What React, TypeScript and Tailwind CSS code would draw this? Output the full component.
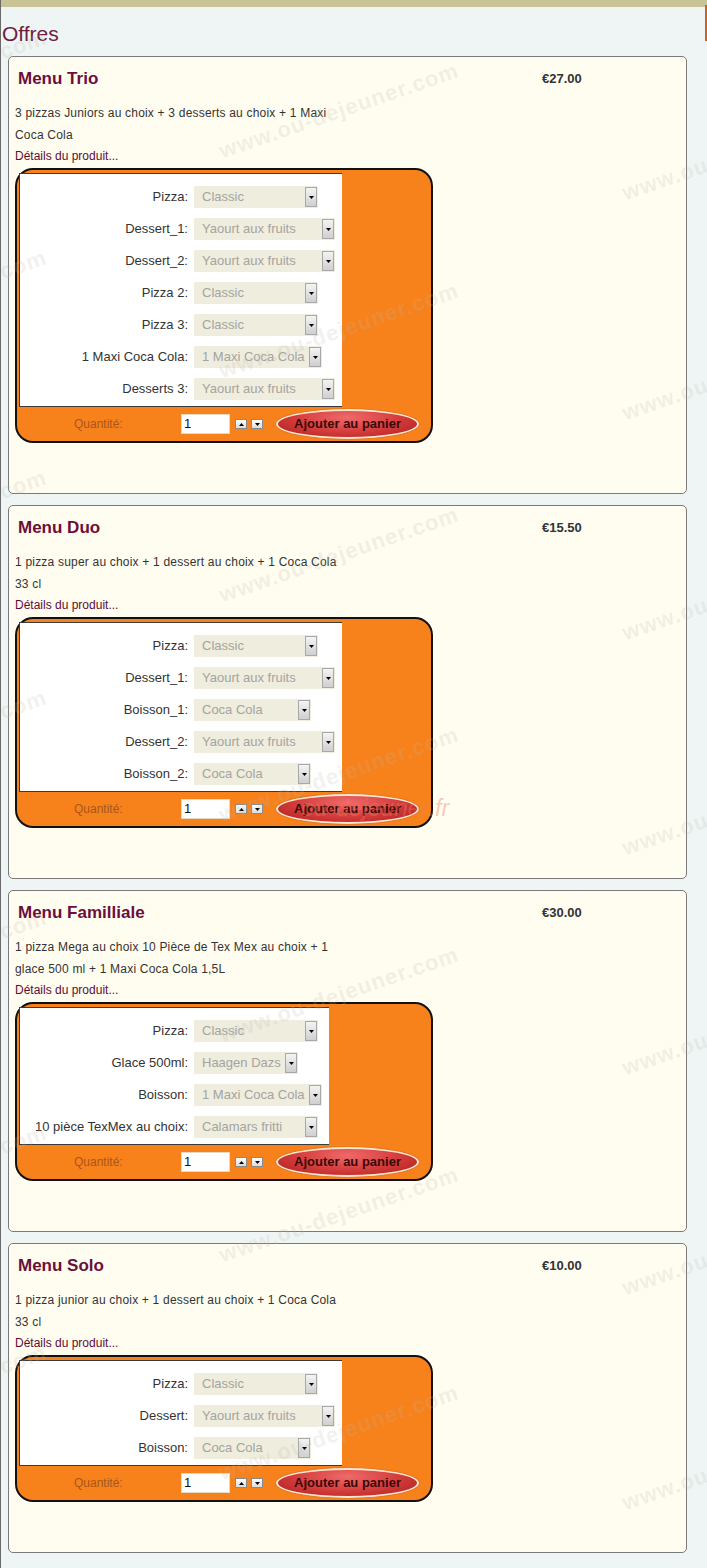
import React from 'react'

type Option = { label: string; value: string; width: string }
type Menu = { name: string; price: string; desc: string; options: Option[] }

const menus: Menu[] = [
  {
    name: 'Menu Trio',
    price: '€27.00',
    desc: '3 pizzas Juniors au choix + 3 desserts au choix + 1 Maxi Coca Cola',
    options: [
      { label: 'Pizza:', value: 'Classic', width: 'w-[124px]' },
      { label: 'Dessert_1:', value: 'Yaourt aux fruits', width: 'w-[141px]' },
      { label: 'Dessert_2:', value: 'Yaourt aux fruits', width: 'w-[141px]' },
      { label: 'Pizza 2:', value: 'Classic', width: 'w-[124px]' },
      { label: 'Pizza 3:', value: 'Classic', width: 'w-[124px]' },
      { label: '1 Maxi Coca Cola:', value: '1 Maxi Coca Cola', width: 'w-[128px]' },
      { label: 'Desserts 3:', value: 'Yaourt aux fruits', width: 'w-[141px]' },
    ],
  },
  {
    name: 'Menu Duo',
    price: '€15.50',
    desc: '1 pizza super au choix + 1 dessert au choix + 1 Coca Cola 33 cl',
    options: [
      { label: 'Pizza:', value: 'Classic', width: 'w-[124px]' },
      { label: 'Dessert_1:', value: 'Yaourt aux fruits', width: 'w-[141px]' },
      { label: 'Boisson_1:', value: 'Coca Cola', width: 'w-[117px]' },
      { label: 'Dessert_2:', value: 'Yaourt aux fruits', width: 'w-[141px]' },
      { label: 'Boisson_2:', value: 'Coca Cola', width: 'w-[117px]' },
    ],
  },
  {
    name: 'Menu Familliale',
    price: '€30.00',
    desc: '1 pizza Mega au choix 10 Pièce de Tex Mex au choix + 1 glace 500 ml + 1 Maxi Coca Cola 1,5L',
    options: [
      { label: 'Pizza:', value: 'Classic', width: 'w-[124px]' },
      { label: 'Glace 500ml:', value: 'Haagen Dazs', width: 'w-[104px]' },
      { label: 'Boisson:', value: '1 Maxi Coca Cola', width: 'w-[128px]' },
      { label: '10 pièce TexMex au choix:', value: 'Calamars fritti', width: 'w-[124px]' },
    ],
  },
  {
    name: 'Menu Solo',
    price: '€10.00',
    desc: '1 pizza junior au choix + 1 dessert au choix + 1 Coca Cola 33 cl',
    options: [
      { label: 'Pizza:', value: 'Classic', width: 'w-[124px]' },
      { label: 'Dessert:', value: 'Yaourt aux fruits', width: 'w-[141px]' },
      { label: 'Boisson:', value: 'Coca Cola', width: 'w-[117px]' },
    ],
  },
]

const Arrow = ({ up = false }: { up?: boolean }) => (
  <svg width="5" height="3" viewBox="0 0 5 3">
    <path d={up ? 'M0 3L2.5 0L5 3Z' : 'M0 0L5 0L2.5 3Z'} fill="#000" />
  </svg>
)

const FakeSelect = ({ value, width }: { value: string; width: string }) => (
  <div className={`${width} h-[22px] bg-[#efedde] flex items-center justify-between pl-[8px] pr-[1px]`}>
    <span className="text-[13px] text-[#a4a4a0] whitespace-nowrap overflow-hidden">{value}</span>
    <div className="w-[12px] h-[20px] shrink-0 border border-[#a8a8a8] bg-gradient-to-b from-[#f4f4f4] to-[#cfcfcf] flex items-center justify-center">
      <Arrow />
    </div>
  </div>
)

const SpinButton = ({ up = false }: { up?: boolean }) => (
  <div className="w-[12px] h-[10px] border border-[#8a8a8a] bg-gradient-to-b from-[#ffffff] to-[#dcdcdc] flex items-center justify-center">
    <Arrow up={up} />
  </div>
)

const MenuCard = ({ menu }: { menu: Menu }) => (
  <div className="ml-[7px] w-[679px] border border-[#7a7a7a] rounded-[5px] bg-[#fffdf0] pt-[11px] pb-[50px] pl-[6px]">
    {/* header: name + price */}
    <div className="flex">
      <div className="w-[527px] pl-[3px] text-[17px] leading-[22px] font-bold text-[#6a0f3c]">{menu.name}</div>
      <div className="text-[13px] leading-[22px] font-bold text-[#333]">{menu.price}</div>
    </div>

    <p className="mt-[12px] w-[330px] text-[12px] leading-[22px] tracking-[0.2px] text-[#333]">{menu.desc}</p>
    <a className="block text-[12px] leading-[20px] text-[#5e0b35]">Détails du produit...</a>

    {/* options box */}
    <div className="mt-[2px] w-[418px] border-2 border-[#111] rounded-[18px] bg-[#f7821c]">
      <div className="mt-[3px] ml-[2px] w-fit bg-white border-l border-t border-b border-[#3a3a3a] pt-[7px] pb-[1px] pr-[7px]">
        {menu.options.map((o) => (
          <div key={o.label} className="flex items-center h-[32px]">
            <div className="w-[168px] text-right text-[13px] text-[#333] whitespace-nowrap">{o.label}</div>
            <div className="ml-[6px]">
              <FakeSelect value={o.value} width={o.width} />
            </div>
          </div>
        ))}
      </div>

      {/* quantity + add to cart */}
      <div className="h-[34px] flex items-center">
        <span className="ml-[57px] w-[107px] text-[12px] text-[#a8561c]">Quantité:</span>
        <div className="w-[49px] h-[20px] bg-white border border-[#e6d9c5] flex items-center pl-[2px] text-[13px] text-[#111]">1</div>
        <div className="ml-[5px] flex gap-[4px]">
          <SpinButton up />
          <SpinButton />
        </div>
        <button className="ml-[13px] w-[143px] h-[30px] rounded-[50%] border-2 border-[#f6e6cf] bg-[radial-gradient(ellipse_at_50%_25%,#ef6a6a_0%,#d33a3a_55%,#a81d1d_100%)] shadow-[0_0_1px_#7a2a10] text-[13px] font-bold text-[#3a0808]">
          Ajouter au panier
        </button>
      </div>
    </div>
  </div>
)

const marksCenter = [108, 328, 552, 772, 992, 1212, 1430]
const marksRight = [150, 370, 590, 805, 1025, 1245, 1460]
const marksLeft = [75, 295, 515, 735, 955, 1170, 1390]

const Watermarks = () => (
  <div className="pointer-events-none absolute inset-0 overflow-hidden">
    {marksCenter.map((y) => (
      <span
        key={'c' + y}
        className="absolute left-[212px] -rotate-[19deg] text-[22px] font-bold tracking-[1px] text-[#bdb6a8]/20 whitespace-nowrap"
        style={{ top: y - 14 }}
      >
        www.ou-dejeuner.com
      </span>
    ))}
    {marksRight.map((y) => (
      <span
        key={'r' + y}
        className="absolute left-[615px] -rotate-[19deg] text-[22px] font-bold tracking-[1px] text-[#bdb6a8]/20 whitespace-nowrap"
        style={{ top: y - 14 }}
      >
        www.ou-dejeuner.com
      </span>
    ))}
    {marksLeft.map((y) => (
      <span
        key={'l' + y}
        className="absolute left-[-200px] -rotate-[19deg] text-[22px] font-bold tracking-[1px] text-[#bdb6a8]/20 whitespace-nowrap"
        style={{ top: y - 14 }}
      >
        www.ou-dejeuner.com
      </span>
    ))}
    <span className="absolute left-[300px] top-[790px] italic text-[24px] text-[#f07a5a]/40 whitespace-nowrap">ou-dejeuner.fr</span>
  </div>
)

const App = () => {
  return (
    <div className="relative min-h-[1568px] bg-[#eff5f5] border-l border-[#6a6a6a] font-['Liberation_Sans',Arial,sans-serif]">
      <div className="h-[7px] bg-[#c9c495]" />
      <div className="absolute right-0 top-[5px] w-[2px] h-[36px] bg-[#c8641e]" />

      <h1 className="pt-[14px] pl-[1px] text-[21px] leading-[26px] text-[#6b1d3e]">Offres</h1>

      <div className="mt-[9px] flex flex-col gap-[11px]">
        {menus.map((m) => (
          <MenuCard key={m.name} menu={m} />
        ))}
      </div>

      <Watermarks />
    </div>
  )
}

export default App
